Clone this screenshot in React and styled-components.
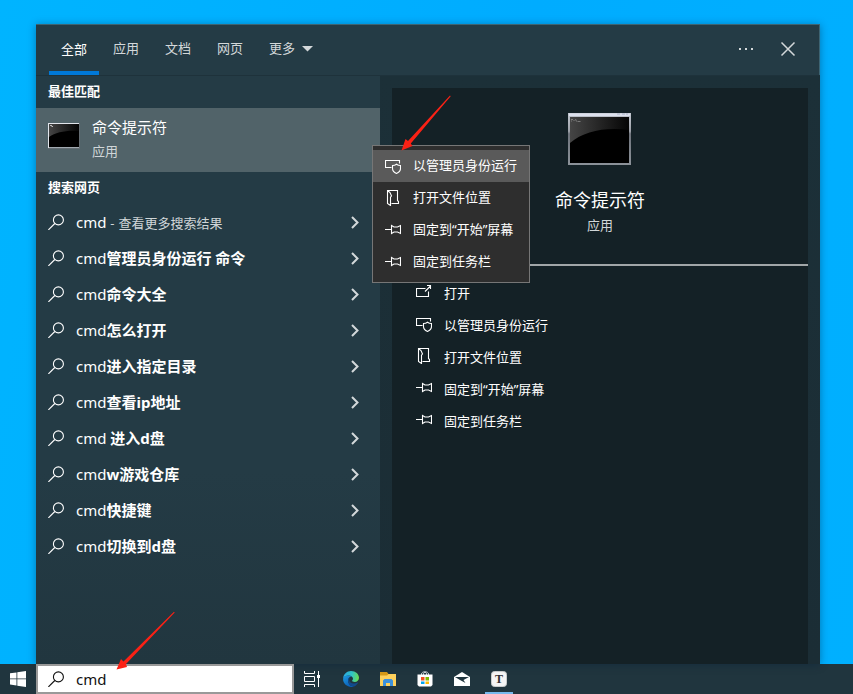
import React, { useState } from 'react';
import styled, { createGlobalStyle } from 'styled-components';

const GlobalStyle = createGlobalStyle`
  * {
    box-sizing: border-box;
  }
  body {
    margin: 0;
    font-family: 'Noto Sans', 'Noto Sans CJK SC', sans-serif;
    font-size: 13px;
    line-height: 20px;
    color: #fff;
  }
  button,
  input {
    font: inherit;
    color: inherit;
    border: none;
    background: none;
    padding: 0;
    margin: 0;
    text-align: left;
  }
  svg {
    display: block;
    flex: none;
  }
`;

const Desktop = styled.div`
  display: flex;
  flex-direction: column;
  min-height: 100vh;
  background: linear-gradient(100deg, #00b4ff 0%, #00acff 55%, #00b0ff 100%);
`;

const SearchWindow = styled.main`
  position: relative;
  flex: 1;
  display: flex;
  flex-direction: column;
  margin: 24px 33px 0 36px;
  background: linear-gradient(#243b45 70%, #21363f);
  box-shadow: 0 1px 8px rgba(0, 30, 60, 0.4), inset 0 1px #3d6473,
    inset -1px 0 #3d6473;
`;

const Header = styled.header`
  display: flex;
  justify-content: space-between;
  height: 52px;
  padding: 0 24px 0 13px;
  border-bottom: 1px solid #1e323b;
`;

const Tabs = styled.nav`
  display: flex;
  gap: 2px;
`;

const Tab = styled.button`
  display: flex;
  align-items: center;
  gap: 7px;
  height: 51px;
  padding: ${(p) => (p.$active ? '2px 12px 0' : '0 12px 4px')};
  color: ${(p) => (p.$active ? '#fff' : '#d3d8da')};
  border-bottom: ${(p) => (p.$active ? '4px solid #0078d7' : 'none')};
`;

const HeaderActions = styled.div`
  display: flex;
  align-items: center;
  gap: 26px;
  padding-bottom: 2px;
`;

const Columns = styled.div`
  flex: 1;
  display: grid;
  grid-template-columns: 344px minmax(0, 1fr);
`;

const Results = styled.section`
  display: flex;
  flex-direction: column;
`;

const GroupTitle = styled.h2`
  margin: 0;
  padding: 5px 12px 7px;
  font-size: 13px;
  font-weight: 700;
  line-height: 20px;
`;

const BestMatch = styled.button`
  display: flex;
  gap: 12px;
  height: 64px;
  padding: 9px 12px;
  background: #516369;
`;

const BestIcon = styled.span`
  padding-top: 6px;
`;

const BestText = styled.span`
  display: flex;
  flex-direction: column;
  gap: 4px;
`;

const BestName = styled.span`
  font-size: 15px;
`;

const Muted = styled.span`
  font-size: 13px;
  color: #d0d6d8;
`;

const ResultRow = styled.button`
  display: flex;
  align-items: center;
  gap: 12px;
  height: 36px;
  padding: 0 21px 0 12px;
  font-size: 15px;
`;

const ResultText = styled.span`
  flex: 1;
  white-space: pre;
`;

const DetailArea = styled.section`
  display: flex;
  padding: 12px 12px 0;
  background: linear-gradient(#1c3038, #1b2d35);
`;

const Detail = styled.div`
  flex: 1;
  background: #142126;
`;

const Hero = styled.div`
  display: flex;
  flex-direction: column;
  align-items: center;
  height: 178px;
  padding-top: 25px;
  border-bottom: 2px solid #a1a6a8;
`;

const HeroName = styled.h1`
  margin: 23px 0 3px;
  font-size: 18px;
  font-weight: 400;
  line-height: 24px;
`;

const Actions = styled.div`
  display: flex;
  flex-direction: column;
  padding: 10px 24px;
`;

const Action = styled.button`
  display: flex;
  align-items: flex-start;
  gap: 12px;
  height: 32px;
  padding-top: 8px;
  line-height: 18px;
`;

const ContextMenu = styled.div`
  position: absolute;
  left: 336px;
  top: 121px;
  display: flex;
  flex-direction: column;
  width: 158px;
  padding: 4px 0;
  background: #2e2e2e;
  border: 1px solid #767676;
`;

const MenuItem = styled.button`
  display: flex;
  align-items: flex-start;
  gap: 12px;
  height: 32px;
  padding: 8px 12px 0;
  line-height: 14px;
  background: ${(p) => (p.$active ? '#5a5a5a' : 'none')};
`;

const MenuArrow = styled.div`
  position: absolute;
  left: 28px;
  bottom: 131px;
`;

const Taskbar = styled.footer`
  display: flex;
  height: 30px;
  background: #20353e;
`;

const StartButton = styled.button`
  display: flex;
  align-items: center;
  justify-content: center;
  width: 36px;
`;

const SearchBox = styled.label`
  position: relative;
  display: flex;
  align-items: center;
  gap: 12px;
  width: 258px;
  padding: 0 10px;
  color: #111;
  background: #fff;
  border: 2px solid #999;
`;

const SearchInput = styled.input`
  flex: 1;
  min-width: 0;
  font-size: 15px;
  outline: none;
`;

const SearchArrow = styled.div`
  position: absolute;
  left: 78px;
  bottom: 21px;
`;

const Apps = styled.div`
  display: flex;
  gap: 1px;
`;

const AppButton = styled.button`
  display: flex;
  align-items: center;
  justify-content: center;
  width: ${(p) => (p.$wide ? '38px' : '36px')};
  padding-right: ${(p) => (p.$wide ? '2px' : '0')};
`;

const RunningApp = styled(AppButton)`
  width: 28px;
  margin: 0 4px;
  padding-top: 2px;
  border-bottom: 2px solid #76b9ed;
`;

const Icon = ({ children }) => (
  <svg width="16" height="16" viewBox="0 0 16 16" fill="none" stroke="currentColor" strokeWidth="1.1">
    {children}
  </svg>
);

const SearchIcon = () => (
  <Icon>
    <circle cx="10.4" cy="5.9" r="5" />
    <path d="M6.8 9.500.4 15.900" />
  </Icon>
);

const OpenIcon = () => (
  <Icon>
    <path d="M9.5 4.5h-9v8h12v-5M9 7.5l5.5-5.5M11 1.5h3.5V5" />
  </Icon>
);

const AdminIcon = () => (
  <Icon>
    <path d="M6.5 9.5h-6v-7h14v3" />
    <path d="M11.5 6.2c-1.2.9-2.6 1.3-4 1.3v3c0 2.2 1.6 3.9 4 4.9 2.4-1 4-2.7 4-4.9v-3c-1.4 0-2.8-.4-4-1.3z" />
  </Icon>
);

const FolderIcon = () => (
  <Icon>
    <path d="M2.5.5h10v10l1 1v2h-7M2.5.5v13l3 2V7.2l1-1.2-1.5-3.5z" />
  </Icon>
);

const PinIcon = () => (
  <Icon>
    <path d="M0 7.5h6.5M6.5 3.5v8l2.500-1.500h3.500l3 1.500v-8l-3 1.500H9z" />
  </Icon>
);

const Chevron = () => (
  <svg width="8" height="14" viewBox="0 0 8 14" fill="none" stroke="#d3d8da" strokeWidth="2">
    <path d="M1 2 6.500 7.500 1 13" />
  </svg>
);

const CmdIconLarge = () => (
  <svg width="64" height="52" viewBox="0 0 64 52">
    <defs>
      <linearGradient id="frame" x2="0" y2="1">
        <stop offset="0" stopColor="#c3c8d0" />
        <stop offset=".35" stopColor="#9da1a8" />
        <stop offset=".4" stopColor="#70757d" />
        <stop offset="1" stopColor="#8c9299" />
      </linearGradient>
      <linearGradient id="gloss" x2="1" y2="0">
        <stop offset="0" stopColor="#454545" />
        <stop offset="1" stopColor="#050505" />
      </linearGradient>
    </defs>
    <path d="M0 0h63v52H0z" fill="url(#frame)" />
    <path d="M1 .5h61V3H1z" fill="#dde1ee" />
    <path d="M49 1h3M54 1h3M58 1h2" stroke="#aab2c6" />
    <path d="M2 4h59v46H2z" />
    <path d="M2 4h59v13C37 14 16 18 2 30z" fill="url(#gloss)" />
    <path d="M3 6.500h2M3 8h1M5.500 7.500h1M7.500 6l1 2.500M9.500 8.500h3" stroke="#8a8a8a" strokeWidth=".8" />
  </svg>
);

const CmdIconSmall = () => (
  <svg width="32" height="26" viewBox="0 0 32 26">
    <path d="M0 0h32v26H0z" fill="#646d73" />
    <path d="M0 0h31v1H1v24H0z" fill="#e1e5eb" />
    <path d="M1 24h30v1H1z" fill="#a2aab1" />
    <path d="M1 1h30v23H1z" />
    <path d="M1 1h30v7C19 7 8 9 1 14z" fill="url(#gloss)" />
    <path d="M2 2.500h2M3.500 3.500H5" stroke="#bbb" />
  </svg>
);

const LongArrow = () => (
  <svg width="60" height="60" viewBox="0 0 60 60" fill="#fb2115">
    <path d="M.5 58.500 5 48l2.500 2.500L58 .8l.7.7L10 53l1 3z" />
  </svg>
);

const MenuPointer = () => (
  <svg width="50" height="56" viewBox="0 0 50 56" fill="#fb2115">
    <path d="M.5 55.500 4.500 44l2.500 2L49 .5l.7.7L9.800 48.500l1.700 2.500z" />
  </svg>
);

const WindowsLogo = () => (
  <svg width="16" height="16" viewBox="0 0 16 16" fill="#fff">
    <path d="M0 2.300 6.500 1.400v6.100H0zM7.300 1.300 16 0v7.500H7.300zM0 8.300h6.500v6.200L0 13.600zM7.300 8.300H16V16l-8.700-1.300z" />
  </svg>
);

const TaskViewIcon = () => (
  <svg width="16" height="16" viewBox="0 0 16 16" fill="none" stroke="#fff">
    <path d="M.5 0v2.500h10V0M.5 5.500h10v5H.5zM.5 16v-2.500h10V16M14.500 0v16" />
    <path d="M13 4h3v3h-3z" fill="#fff" stroke="none" />
  </svg>
);

const EdgeIcon = () => (
  <svg width="16" height="16" viewBox="0 0 16 16">
    <defs>
      <linearGradient id="edgeTop" x1="0" y1=".4" x2="1" y2=".5">
        <stop offset="0" stopColor="#2aa9e6" />
        <stop offset=".55" stopColor="#32c5c5" />
        <stop offset="1" stopColor="#6bdc4f" />
      </linearGradient>
      <linearGradient id="edgeLow" x2=".6" y2="1">
        <stop offset="0" stopColor="#1d9be2" />
        <stop offset="1" stopColor="#0b5cb5" />
      </linearGradient>
    </defs>
    <path d="M.1 7.700C.4 3.200 3.800 0 8 0c4.700 0 8 3.200 8 6.700 0 2.600-2 4.200-4.200 4.200-1.700 0-2.700-.6-2.700-1.200 0-.4.900-.7.900-2 0-1.900-1.900-3.200-4.300-3.200C3 4.500 1 5.700.1 7.700z" fill="url(#edgeTop)" />
    <path d="M.1 7.700c.6-2 2.600-3.200 5-3.200 1.500 0 2.700.4 3.500 1C6.500 5.600 5 7.200 5 9.500c0 3.500 2.800 6 6 5.900C6 17.300-.4 13.600.1 7.700z" fill="url(#edgeLow)" />
    <path d="M7.100 6.300C5.500 7 5 8.300 5 9.500c0 3.500 2.800 6 6 5.900 1.700-.7 3.100-1.900 4-3.500.1-.3-.1-.4-.4-.3-3.100 1.700-8.500 1-8.400-3.100 0-.8.300-1.600.9-2.200z" fill="#114a8b" />
  </svg>
);

const ExplorerIcon = () => (
  <svg width="16" height="14" viewBox="0 0 16 14">
    <path d="M0 0h7l1.500 2H16v4H0z" fill="#d99a17" />
    <path d="M0 3.500h7L8.500 2H16v12H0z" fill="#ffd15c" />
    <path d="M3 14V8.500L4.500 7h7L13 8.500V14h-3v-3H6v3z" fill="#3d91dc" />
  </svg>
);

const StoreIcon = () => (
  <svg width="16" height="16" viewBox="0 0 16 16">
    <path d="M4.500 5V3c0-3 7-3 7 0v2M6.500 4V2.500c0-1.500 3-1.500 3 0V4" fill="none" stroke="#c8d0d4" />
    <path d="M.5 3.500h15V14L14 15.500H2L.5 14z" fill="#fff" />
    <path d="M4 6h3.500v3.500H4z" fill="#f25022" />
    <path d="M8.500 6H12v3.500H8.500z" fill="#7fba00" />
    <path d="M4 10.500h3.500V13H4z" fill="#00a4ef" />
    <path d="M8.500 10.500H12V13H8.500z" fill="#ffb900" />
  </svg>
);

const MailIcon = () => (
  <svg width="16" height="14" viewBox="0 0 16 14">
    <path d="M0 5 8 0l8 5v9H0z" fill="#fff" />
    <path d="M1 5h14L9.500 8l2 3L6 8z" fill="#20353e" />
  </svg>
);

const TyporaIcon = () => (
  <svg width="16" height="16" viewBox="0 0 16 16">
    <rect x=".5" y=".5" width="15" height="15" rx="3" fill="#f5f5f5" stroke="#c9cccd" />
    <text x="8" y="12" fontFamily="Liberation Serif, serif" fontWeight="700" fontSize="12" textAnchor="middle" fill="#333">
      T
    </text>
  </svg>
);

const tabs = ['全部', '应用', '文档', '网页', '更多'];

const suggestions = [
  '管理员身份运行 命令',
  '命令大全',
  '怎么打开',
  '进入指定目录',
  '查看ip地址',
  ' 进入d盘',
  'w游戏仓库',
  '快捷键',
  '切换到d盘',
];

const menuActions = [
  { name: '以管理员身份运行', icon: AdminIcon },
  { name: '打开文件位置', icon: FolderIcon },
  { name: '固定到“开始”屏幕', icon: PinIcon },
  { name: '固定到任务栏', icon: PinIcon },
];

const detailActions = [{ name: '打开', icon: OpenIcon }, ...menuActions];

const taskbarApps = [
  { name: 'Microsoft Edge', icon: EdgeIcon },
  { name: 'File Explorer', icon: ExplorerIcon },
  { name: 'Microsoft Store', icon: StoreIcon },
  { name: 'Mail', icon: MailIcon },
];

export default function App() {
  const [activeTab, setActiveTab] = useState('全部');
  const [query, setQuery] = useState('cmd');

  return (
    <>
      <GlobalStyle />
      <Desktop lang="zh-CN">
        <SearchWindow>
          <Header>
            <Tabs>
              {tabs.map((tab) => (
                <Tab key={tab} $active={tab === activeTab} onClick={() => setActiveTab(tab)}>
                  {tab}
                  {tab === '更多' && (
                    <svg width="11" height="8" viewBox="0 0 11 8" fill="currentColor">
                      <path d="M0 2h11L5.500 7.500z" />
                    </svg>
                  )}
                </Tab>
              ))}
            </Tabs>
            <HeaderActions>
              <button aria-label="选项">
                <svg width="16" height="16" viewBox="0 0 16 16" fill="#d3d8da">
                  <path d="M1 7h2v2H1zM7 7h2v2H7zM13 7h2v2h-2z" />
                </svg>
              </button>
              <button aria-label="关闭">
                <svg width="16" height="16" viewBox="0 0 16 16" stroke="#d3d8da" strokeWidth="1.5">
                  <path d="m1.500 1.500 13 13M14.500 1.500l-13 13" />
                </svg>
              </button>
            </HeaderActions>
          </Header>
          <Columns>
            <Results>
              <GroupTitle>最佳匹配</GroupTitle>
              <BestMatch>
                <BestIcon>
                  <CmdIconSmall />
                </BestIcon>
                <BestText>
                  <BestName>命令提示符</BestName>
                  <Muted>应用</Muted>
                </BestText>
              </BestMatch>
              <GroupTitle>搜索网页</GroupTitle>
              <ResultRow>
                <SearchIcon />
                <ResultText>
                  {'cmd '}
                  <Muted>-</Muted>
                  {' '}
                  <Muted>查看更多搜索结果</Muted>
                </ResultText>
                <Chevron />
              </ResultRow>
              {suggestions.map((text) => (
                <ResultRow key={text}>
                  <SearchIcon />
                  <ResultText>
                    cmd<b>{text}</b>
                  </ResultText>
                  <Chevron />
                </ResultRow>
              ))}
            </Results>
            <DetailArea>
              <Detail>
                <Hero>
                  <CmdIconLarge />
                  <HeroName>命令提示符</HeroName>
                  <Muted>应用</Muted>
                </Hero>
                <Actions>
                  {detailActions.map(({ name, icon: ActionIcon }) => (
                    <Action key={name}>
                      <ActionIcon />
                      {name}
                    </Action>
                  ))}
                </Actions>
              </Detail>
            </DetailArea>
          </Columns>
          <ContextMenu>
            {menuActions.map(({ name, icon: ActionIcon }, i) => (
              <MenuItem key={name} $active={i === 0}>
                <ActionIcon />
                {name}
              </MenuItem>
            ))}
            <MenuArrow>
              <MenuPointer />
            </MenuArrow>
          </ContextMenu>
        </SearchWindow>
        <Taskbar>
          <StartButton aria-label="开始">
            <WindowsLogo />
          </StartButton>
          <SearchBox>
            <SearchIcon />
            <SearchInput
              aria-label="搜索"
              value={query}
              onChange={(e) => setQuery(e.target.value)}
            />
            <SearchArrow>
              <LongArrow />
            </SearchArrow>
          </SearchBox>
          <Apps>
            <AppButton $wide aria-label="任务视图">
              <TaskViewIcon />
            </AppButton>
            {taskbarApps.map(({ name, icon: AppIcon }) => (
              <AppButton key={name} aria-label={name}>
                <AppIcon />
              </AppButton>
            ))}
            <RunningApp aria-label="Typora">
              <TyporaIcon />
            </RunningApp>
          </Apps>
        </Taskbar>
      </Desktop>
    </>
  );
}
